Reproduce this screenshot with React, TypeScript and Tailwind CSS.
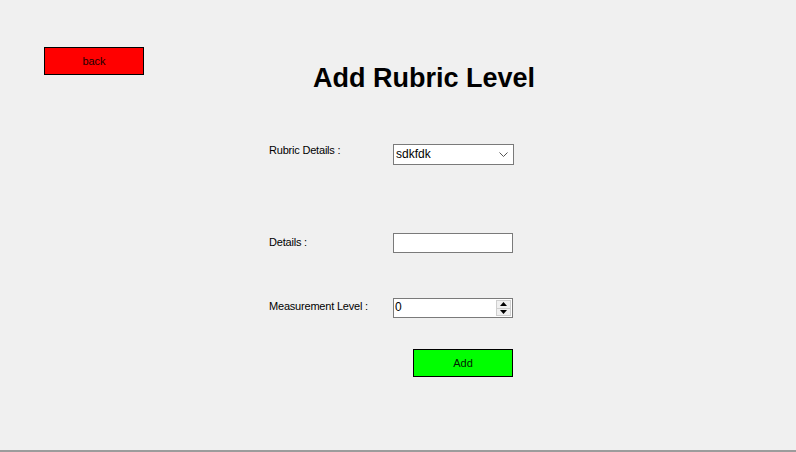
import React from "react";

const Spinner = () => (
    <div className="flex flex-col w-[15px] h-full">
        <div className="flex-1 flex items-center justify-center bg-[#f0f0f0] border border-[#cfcfcf] border-b-0">
            <svg width="7" height="4" viewBox="0 0 7 4"><polygon points="3.5,0 7,4 0,4" fill="#000" /></svg>
        </div>
        <div className="flex-1 flex items-center justify-center bg-[#f0f0f0] border border-[#cfcfcf]">
            <svg width="7" height="4" viewBox="0 0 7 4"><polygon points="0,0 7,0 3.5,4" fill="#000" /></svg>
        </div>
    </div>
);

export default function App() {
    return (
        <div className="w-[796px] h-[452px] bg-[#f0f0f0] flex flex-col overflow-hidden text-black font-['Liberation_Sans',Arial,sans-serif]">
            {/* header */}
            <div className="flex items-start">
                <button className="ml-[44px] mt-[47px] w-[100px] h-[28px] bg-[#ff0000] border border-black text-[11px] text-[#1a0000] flex items-center justify-center">
                    back
                </button>
                <h1 className="ml-[169px] mt-[65px] text-[27px] leading-[27px] font-bold whitespace-nowrap">
                    Add Rubric Level
                </h1>
            </div>

            {/* form */}
            <div className="flex flex-col pl-[269px] mt-[52px] text-[11px] leading-[13px] tracking-[-0.2px]">
                <div className="flex items-start">
                    <label className="w-[124px]">Rubric Details :</label>
                    <div className="w-[121px] h-[21px] bg-white border border-[#7a7a7a] flex items-center justify-between pl-[2px] pr-[5px] tracking-normal">
                        <span className="text-[12px]">sdkfdk</span>
                        <svg width="9" height="5" viewBox="0 0 9 5"><polyline points="0.5,0.5 4.5,4.5 8.5,0.5" fill="none" stroke="#555" strokeWidth="1" /></svg>
                    </div>
                </div>

                <div className="flex items-start mt-[68px]">
                    <label className="w-[124px] mt-[3px]">Details :</label>
                    <input className="w-[120px] h-[20px] bg-white border border-[#7a7a7a] outline-none" />
                </div>

                <div className="flex items-start mt-[45px]">
                    <label className="w-[124px] mt-[2px]">Measurement Level :</label>
                    <div className="w-[120px] h-[20px] bg-white border border-[#7a7a7a] flex">
                        <span className="flex-1 pl-[1px] pt-[2px] text-[12px]">0</span>
                        <div className="py-[1px] pr-[1px] h-full"><Spinner /></div>
                    </div>
                </div>

                <div className="mt-[31px] tracking-normal">
                    <button className="ml-[144px] w-[100px] h-[28px] bg-[#00ff00] border border-black text-[11px] text-[#002200] flex items-center justify-center">
                        Add
                    </button>
                </div>
            </div>

            <div className="flex-1" />
            <div className="h-[2px] bg-[#9c9c9c]" />
        </div>
    );
}
